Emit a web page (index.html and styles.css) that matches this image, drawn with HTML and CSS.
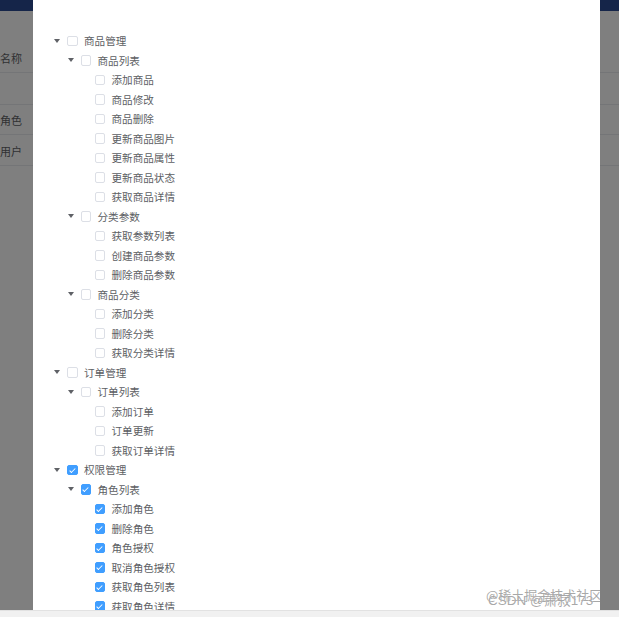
FILE: index.html
```html
<!DOCTYPE html>
<html lang="zh-CN">
<head>
<meta charset="utf-8">
<title>分配权限</title>
<link rel="stylesheet" href="styles.css">
</head>
<body>
<div class="viewport">
  <div class="app">
    <div class="topbar"></div>
    <div class="table">
      <div class="trow head"><span class="cell">名称</span></div>
      <div class="trow blank"><span class="cell"></span></div>
      <div class="trow r1"><span class="cell">角色</span></div>
      <div class="trow r2"><span class="cell">用户</span></div>
    </div>
  </div>
  <div class="mask"></div>
  <div class="dialog">
    <div class="tree">
      <div class="node l0"><span class="caret"></span><span class="cb"></span><span class="label">商品管理</span></div>
      <div class="node l1"><span class="caret"></span><span class="cb"></span><span class="label">商品列表</span></div>
      <div class="node l2"><span class="caret leaf"></span><span class="cb"></span><span class="label">添加商品</span></div>
      <div class="node l2"><span class="caret leaf"></span><span class="cb"></span><span class="label">商品修改</span></div>
      <div class="node l2"><span class="caret leaf"></span><span class="cb"></span><span class="label">商品删除</span></div>
      <div class="node l2"><span class="caret leaf"></span><span class="cb"></span><span class="label">更新商品图片</span></div>
      <div class="node l2"><span class="caret leaf"></span><span class="cb"></span><span class="label">更新商品属性</span></div>
      <div class="node l2"><span class="caret leaf"></span><span class="cb"></span><span class="label">更新商品状态</span></div>
      <div class="node l2"><span class="caret leaf"></span><span class="cb"></span><span class="label">获取商品详情</span></div>
      <div class="node l1"><span class="caret"></span><span class="cb"></span><span class="label">分类参数</span></div>
      <div class="node l2"><span class="caret leaf"></span><span class="cb"></span><span class="label">获取参数列表</span></div>
      <div class="node l2"><span class="caret leaf"></span><span class="cb"></span><span class="label">创建商品参数</span></div>
      <div class="node l2"><span class="caret leaf"></span><span class="cb"></span><span class="label">删除商品参数</span></div>
      <div class="node l1"><span class="caret"></span><span class="cb"></span><span class="label">商品分类</span></div>
      <div class="node l2"><span class="caret leaf"></span><span class="cb"></span><span class="label">添加分类</span></div>
      <div class="node l2"><span class="caret leaf"></span><span class="cb"></span><span class="label">删除分类</span></div>
      <div class="node l2"><span class="caret leaf"></span><span class="cb"></span><span class="label">获取分类详情</span></div>
      <div class="node l0"><span class="caret"></span><span class="cb"></span><span class="label">订单管理</span></div>
      <div class="node l1"><span class="caret"></span><span class="cb"></span><span class="label">订单列表</span></div>
      <div class="node l2"><span class="caret leaf"></span><span class="cb"></span><span class="label">添加订单</span></div>
      <div class="node l2"><span class="caret leaf"></span><span class="cb"></span><span class="label">订单更新</span></div>
      <div class="node l2"><span class="caret leaf"></span><span class="cb"></span><span class="label">获取订单详情</span></div>
      <div class="node l0"><span class="caret"></span><span class="cb on"></span><span class="label">权限管理</span></div>
      <div class="node l1"><span class="caret"></span><span class="cb on"></span><span class="label">角色列表</span></div>
      <div class="node l2"><span class="caret leaf"></span><span class="cb on"></span><span class="label">添加角色</span></div>
      <div class="node l2"><span class="caret leaf"></span><span class="cb on"></span><span class="label">删除角色</span></div>
      <div class="node l2"><span class="caret leaf"></span><span class="cb on"></span><span class="label">角色授权</span></div>
      <div class="node l2"><span class="caret leaf"></span><span class="cb on"></span><span class="label">取消角色授权</span></div>
      <div class="node l2"><span class="caret leaf"></span><span class="cb on"></span><span class="label">获取角色列表</span></div>
      <div class="node l2"><span class="caret leaf"></span><span class="cb on"></span><span class="label">获取角色详情</span></div>
    </div>
    <div class="watermark">
      <span class="wm1">@稀土掘金技术社区</span>
      <span class="wm2">CSDN @萧寂173</span>
    </div>
  </div>
</div>
<div class="hscroll"></div>
</body>
</html>
```

FILE: styles.css
```css
html, body {
  margin: 0;
  padding: 0;
}
body {
  width: 619px;
  height: 617px;
  overflow: hidden;
  display: flex;
  flex-direction: column;
  font-family: "Noto Sans CJK SC", "Noto Sans", sans-serif;
  background: #fff;
}
.viewport {
  position: relative;
  height: 610px;
  overflow: hidden;
  flex: none;
}
.app {
  height: 100%;
  background: #fff;
}
.topbar {
  height: 11px;
  background: #2b4a92;
}
.table {
  padding-top: 35px;
}
.trow {
  display: flex;
  border-bottom: 1px solid #e8eaee;
  box-sizing: border-box;
}
.trow.head { height: 27px; }
.trow.blank { height: 32px; }
.trow.r1 { height: 30px; }
.trow.r2 { height: 31px; }
.cell {
  display: flex;
  align-items: center;
  white-space: nowrap;
  font-size: 11px;
  color: #606266;
}
.trow.head .cell { padding-bottom: 3px; }
.trow.r2 .cell { padding-top: 1px; }
.mask {
  position: absolute;
  inset: 0;
  background: rgba(0, 0, 0, 0.5);
}
.dialog {
  position: absolute;
  left: 33px;
  top: 0;
  width: 567px;
  height: 610px;
  background: #fff;
  overflow: hidden;
}
.tree {
  padding: 31px 0 0 15px;
}
.node {
  height: 19.5px;
  display: flex;
  align-items: center;
}
.node.l1 { padding-left: 13.5px; }
.node.l2 { padding-left: 27.5px; }
.caret {
  width: 19px;
  height: 19.5px;
  display: flex;
  align-items: center;
  justify-content: center;
  flex: none;
  padding-right: 1px;
  box-sizing: border-box;
}
.caret::before {
  content: "";
  width: 0;
  height: 0;
  border-left: 3px solid transparent;
  border-right: 3px solid transparent;
  border-top: 4px solid #5f6166;
}
.caret.leaf::before {
  border-top-color: transparent;
}
.cb {
  width: 10.5px;
  height: 10.5px;
  box-sizing: border-box;
  border: 1px solid #dcdfe6;
  border-radius: 2px;
  background: #fff;
  margin-right: 6.5px;
  flex: none;
  position: relative;
}
.cb.on {
  background: #409eff;
  border-color: #409eff;
}
.cb.on::after {
  content: "";
  position: absolute;
  left: 2.9px;
  top: 1px;
  width: 2.2px;
  height: 4.8px;
  border: 1px solid #fff;
  border-left: 0;
  border-top: 0;
  transform: rotate(45deg);
}
.label {
  font-size: 10.6px;
  color: #5c5e63;
  line-height: 19.5px;
  white-space: nowrap;
}
.watermark {
  position: absolute;
  left: 453px;
  top: 587px;
  width: 130px;
  height: 24px;
  pointer-events: none;
}
.wm1, .wm2 {
  position: absolute;
  white-space: nowrap;
  color: rgba(140, 140, 140, 0.75);
  text-shadow: 0 0 1px #fff;
}
.wm1 {
  left: 0;
  top: 0;
  font-size: 13px;
  line-height: 16px;
}
.wm2 {
  left: 2px;
  top: 5px;
  font-size: 13.5px;
  line-height: 17px;
  font-family: "Liberation Sans", "Noto Sans CJK SC", sans-serif;
}
.hscroll {
  height: 7px;
  flex: none;
  background: #f1f1f1;
  border-top: 1px solid #e2e2e2;
  box-sizing: border-box;
}
```
